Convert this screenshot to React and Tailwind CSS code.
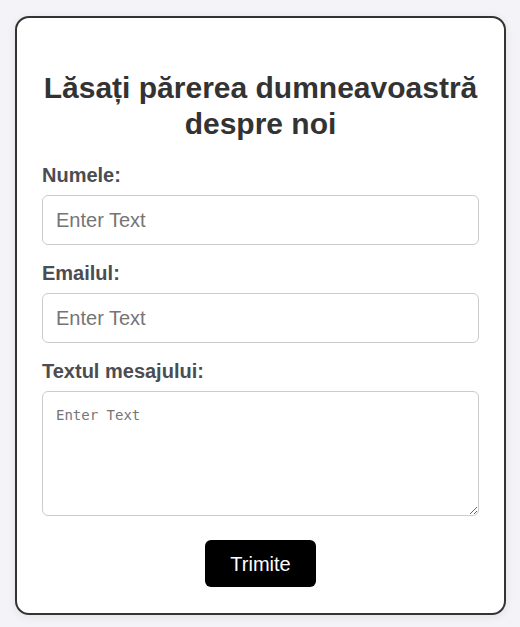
export default function App() {
    return (
        <div className="min-h-[627px] w-full bg-[#f3f3f8] pt-4 px-[15px]" style={{ fontFamily: '"Liberation Sans", Arial, sans-serif' }}>
            <form className="w-[491px] rounded-[14px] border-2 border-[#333] bg-white px-[25px] pt-[52px] pb-[26px] shadow-[0_2px_10px_rgba(0,0,0,0.08)]">
                <h2 className="text-center text-[30px] font-bold leading-[36px] text-[#333] mb-[22px]">
                    Lăsați părerea dumneavoastră despre noi
                </h2>

                <label className="block text-[20px] font-bold leading-[23px] text-[#4a4d52] mb-2">Numele:</label>
                <input
                    type="text"
                    placeholder="Enter Text"
                    className="block w-full h-[50px] rounded-md border border-[#ccc] px-[13px] text-[20px] text-[#333] placeholder:text-[#757575] outline-none mb-[17px]"
                />

                <label className="block text-[20px] font-bold leading-[23px] text-[#4a4d52] mb-2">Emailul:</label>
                <input
                    type="text"
                    placeholder="Enter Text"
                    className="block w-full h-[50px] rounded-md border border-[#ccc] px-[13px] text-[20px] text-[#333] placeholder:text-[#757575] outline-none mb-[17px]"
                />

                <label className="block text-[20px] font-bold leading-[23px] text-[#4a4d52] mb-2">Textul mesajului:</label>
                <textarea
                    placeholder="Enter Text"
                    className="block w-full h-[125px] rounded-md border border-[#ccc] px-[13px] pt-[15px] pb-3 text-[14px] leading-[16px] text-[#333] placeholder:text-[#757575] outline-none"
                    style={{ fontFamily: '"DejaVu Sans Mono", monospace' }}
                />

                <div className="flex justify-center mt-6">
                    <button type="button" className="w-[111px] h-[47px] rounded-md bg-black text-white text-[20px]">
                        Trimite
                    </button>
                </div>
            </form>
        </div>
    );
}
